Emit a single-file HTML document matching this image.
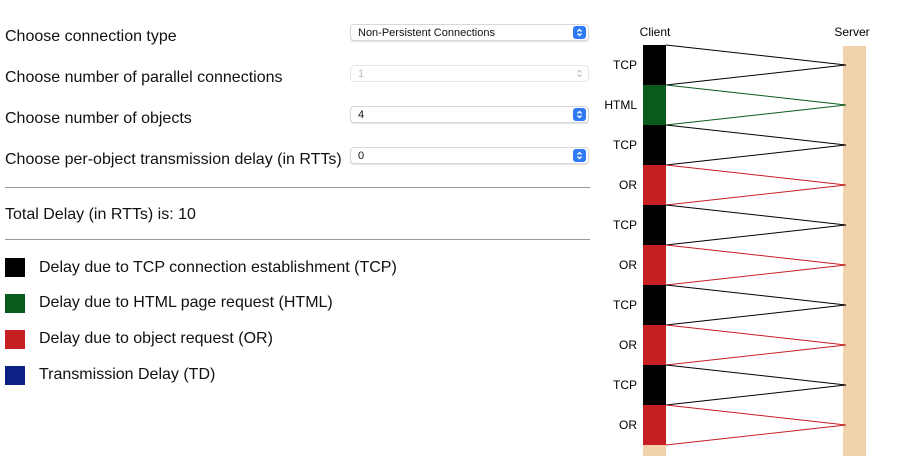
<!DOCTYPE html>
<html><head><meta charset="utf-8"><style>
body{margin:0;width:906px;height:456px;background:#fff;font-family:"Liberation Sans",Arial,sans-serif;color:#111;position:relative;overflow:hidden}
.lbl{position:absolute;left:5px;font-size:16px;line-height:20px}
.sel{position:absolute;left:350px;width:239px;height:17px;border:1px solid #d8d8d8;border-radius:4px;box-shadow:0 1px 1px rgba(0,0,0,.12);font-size:11px;line-height:16px;box-sizing:border-box;padding-left:7px;background:#fff}
.sel svg{position:absolute;right:2px;top:1px}
.sel.dis{color:#bbb;box-shadow:none;border-color:#e6e6e6}
.hr{position:absolute;left:5px;width:585px;height:1px;background:#999}
.sq{position:absolute;left:5px;width:20px;height:19px}
.lg{position:absolute;left:39px;font-size:16px;line-height:20px}
</style></head><body>
<div class="lbl" style="top:27px">Choose connection type</div>
<div class="lbl" style="top:68px">Choose number of parallel connections</div>
<div class="lbl" style="top:109px">Choose number of objects</div>
<div class="lbl" style="top:150px">Choose per-object transmission delay (in RTTs)</div>
<div class="sel" style="top:24px">Non-Persistent Connections<svg width="13" height="13"><rect width="13" height="13" rx="3" fill="#2f7bf5"/><path d="M4.5 5.5L6.5 3.5L8.5 5.5M4.5 7.5L6.5 9.5L8.5 7.5" stroke="#fff" stroke-width="1.3" fill="none"/></svg></div>
<div class="sel dis" style="top:65px">1<svg width="13" height="13"><path d="M4.5 5.5L6.5 3.5L8.5 5.5M4.5 7.5L6.5 9.5L8.5 7.5" stroke="#bbb" stroke-width="1" fill="none"/></svg></div>
<div class="sel" style="top:106px">4<svg width="13" height="13"><rect width="13" height="13" rx="3" fill="#2f7bf5"/><path d="M4.5 5.5L6.5 3.5L8.5 5.5M4.5 7.5L6.5 9.5L8.5 7.5" stroke="#fff" stroke-width="1.3" fill="none"/></svg></div>
<div class="sel" style="top:147px">0<svg width="13" height="13"><rect width="13" height="13" rx="3" fill="#2f7bf5"/><path d="M4.5 5.5L6.5 3.5L8.5 5.5M4.5 7.5L6.5 9.5L8.5 7.5" stroke="#fff" stroke-width="1.3" fill="none"/></svg></div>
<div class="hr" style="top:187px"></div>
<div class="lbl" style="top:205px">Total Delay (in RTTs) is: 10</div>
<div class="hr" style="top:239px"></div>
<div class="sq" style="top:258px;background:#000"></div><div class="lg" style="top:258px">Delay due to TCP connection establishment (TCP)</div>
<div class="sq" style="top:294px;background:#0b5a1d"></div><div class="lg" style="top:293px">Delay due to HTML page request (HTML)</div>
<div class="sq" style="top:330px;background:#c71e24"></div><div class="lg" style="top:329px">Delay due to object request (OR)</div>
<div class="sq" style="top:366px;background:#0b2183"></div><div class="lg" style="top:365px">Transmission Delay (TD)</div>
<svg width="906" height="456" style="position:absolute;left:0;top:0" font-family="Liberation Sans,Arial,sans-serif" font-size="12">
<text x="655" y="36" text-anchor="middle">Client</text>
<text x="852" y="36" text-anchor="middle">Server</text>
<rect x="843" y="46" width="23" height="410" fill="#f2d1ad"/>
<rect x="643" y="445" width="23" height="11" fill="#f2d1ad"/>
<rect x="643" y="45" width="23" height="40" fill="#000"/>
<rect x="643" y="85" width="23" height="40" fill="#0b5a1d"/>
<rect x="643" y="125" width="23" height="40" fill="#000"/>
<rect x="643" y="165" width="23" height="40" fill="#c71e24"/>
<rect x="643" y="205" width="23" height="40" fill="#000"/>
<rect x="643" y="245" width="23" height="40" fill="#c71e24"/>
<rect x="643" y="285" width="23" height="40" fill="#000"/>
<rect x="643" y="325" width="23" height="40" fill="#c71e24"/>
<rect x="643" y="365" width="23" height="40" fill="#000"/>
<rect x="643" y="405" width="23" height="40" fill="#c71e24"/>
<g fill="none" stroke-width="1">
<polyline points="666,45 846,65 666,85" stroke="#000"/>
<polyline points="666,85 846,105 666,125" stroke="#0b5a1d"/>
<polyline points="666,125 846,145 666,165" stroke="#000"/>
<polyline points="666,165 846,185 666,205" stroke="#c71e24"/>
<polyline points="666,205 846,225 666,245" stroke="#000"/>
<polyline points="666,245 846,265 666,285" stroke="#c71e24"/>
<polyline points="666,285 846,305 666,325" stroke="#000"/>
<polyline points="666,325 846,345 666,365" stroke="#c71e24"/>
<polyline points="666,365 846,385 666,405" stroke="#000"/>
<polyline points="666,405 846,425 666,445" stroke="#c71e24"/>
</g>
<g text-anchor="end">
<text x="637" y="69">TCP</text>
<text x="637" y="109">HTML</text>
<text x="637" y="149">TCP</text>
<text x="637" y="189">OR</text>
<text x="637" y="229">TCP</text>
<text x="637" y="269">OR</text>
<text x="637" y="309">TCP</text>
<text x="637" y="349">OR</text>
<text x="637" y="389">TCP</text>
<text x="637" y="429">OR</text>
</g>
</svg>
</body></html>
